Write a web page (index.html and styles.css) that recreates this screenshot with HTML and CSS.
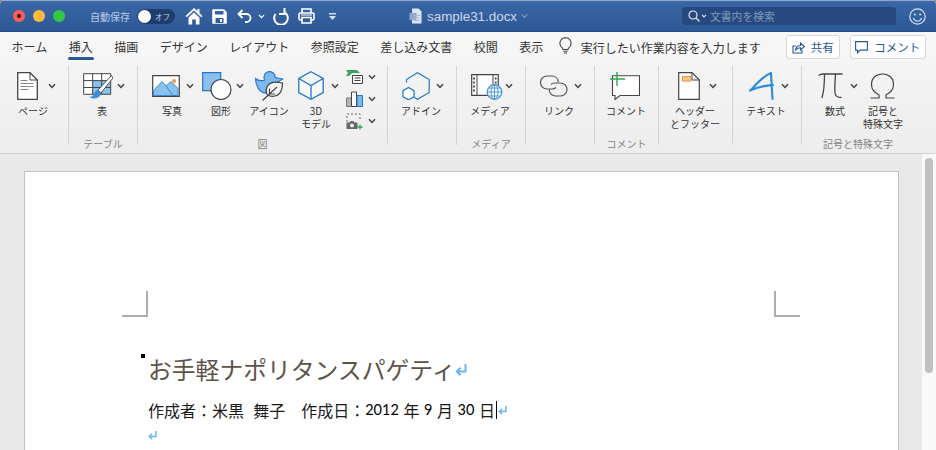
FILE: index.html
```html
<!DOCTYPE html>
<html lang="ja">
<head>
<meta charset="utf-8">
<title>sample31.docx</title>
<link rel="stylesheet" href="styles.css">
</head>
<body>
<svg class="defs" width="0" height="0">
  <symbol id="chev" viewBox="0 0 8 6"><path d="M1 1.200 4 4.400 7 1.200" fill="none" stroke="#444" stroke-width="1.500"/></symbol>
  <symbol id="ret" viewBox="0 0 12 13"><path d="M10.500 1v7.500H2M5.500 4.800 1.800 8.500l3.700 3.700" fill="none" stroke="#69b5f2" stroke-width="2"/></symbol>
</svg>
<div class="window">
  <header class="titlebar">
    <div class="lights"><span class="light red"></span><span class="light yellow"></span><span class="light green"></span></div>
    <span class="autosave">自動保存</span>
    <span class="toggle"><span class="knob"></span><span class="off">オフ</span></span>
    <svg class="qa qa-home" width="18" height="18" viewBox="0 0 18 18"><path d="M9 1 .5 9l1.200 1.200L9 3.400l7.300 6.800L17.500 9 14.500 6.200V2h-2.200v2.100zM3.500 10.500 9 5.400l5.500 5.100V17.500h-3.700v-5H7.200v5H3.500z" fill="#fff"/></svg>
    <svg class="qa qa-save" width="15" height="15" viewBox="0 0 15 15"><path d="M1 .2h11L14.800 3v11a.8.8 0 0 1-.8.8H1a.8.8 0 0 1-.8-.8V1A.8.8 0 0 1 1 .2zM3 2v3.500h8.500V2zM3.500 14h8V9h-8zM8 10h2v3H8z" fill="#fff" fill-rule="evenodd"/></svg>
    <svg class="qa qa-undo" width="15" height="14" viewBox="0 0 15 14"><path d="M5.500 1 1.500 5l4 4M1.500 5h8a4 4 0 0 1 0 8H8" fill="none" stroke="#fff" stroke-width="1.800"/></svg>
    <svg class="qa qa-chev" width="7" height="5" viewBox="0 0 8 6"><path d="M1 1.200 4 4.400 7 1.200" fill="none" stroke="#fff" stroke-width="1.400"/></svg>
    <svg class="qa qa-redo" width="16" height="17" viewBox="0 0 16 17"><path d="M2.500 6A6.800 6.800 0 1 0 12 4.500" fill="none" stroke="#fff" stroke-width="2"/><path d="M11.500 0v6H6" fill="none" stroke="#fff" stroke-width="2"/></svg>
    <svg class="qa qa-print" width="17" height="16" viewBox="0 0 17 16"><path d="M4 5V1h9v4M4 12H2.500A1.500 1.500 0 0 1 1 10.500v-4A1.500 1.500 0 0 1 2.500 5h12A1.500 1.500 0 0 1 16 6.500v4a1.500 1.500 0 0 1-1.500 1.500H13M4 9.500h9V15H4z" fill="none" stroke="#fff" stroke-width="1.600"/><path d="M3 7h11" stroke="#fff"/></svg>
    <svg class="qa qa-more" width="7" height="7" viewBox="0 0 7 7"><path d="M0 0h7v1.500H0zM0 3h7L3.500 7z" fill="#d5e0ef"/></svg>
    <svg class="qa qa-doc" width="13" height="16" viewBox="0 0 13 16"><path d="M3 .5h6.500L12.500 3.500v12H3z" fill="#dfe6f0"/><path d="M.5 5h7v7h-7z" fill="#8fa9cc"/><path d="M5 7.500h6M5 10h6M5 12.500h6" stroke="#a9bbd6"/></svg>
    <span class="filename">sample31.docx</span>
    <svg class="qa qa-fchev" width="9" height="6" viewBox="0 0 8 6"><path d="M1 1.200 4 4.400 7 1.200" fill="none" stroke="#7f9ac2" stroke-width="1.100"/></svg>
    <div class="search">
      <svg width="12" height="12" viewBox="0 0 12 12"><circle cx="5" cy="5" r="4" fill="none" stroke="#e3eaf4" stroke-width="1.200"/><path d="M8 8l3.500 3.500" stroke="#e3eaf4" stroke-width="1.300"/></svg>
      <svg class="search-chev" width="6" height="4" viewBox="0 0 8 6"><path d="M1 1.200 4 4.400 7 1.200" fill="none" stroke="#e3eaf4" stroke-width="1.600"/></svg>
      <span class="search-text">文書内を検索</span>
    </div>
    <svg class="smile" width="17" height="17" viewBox="0 0 17 17"><circle cx="8.500" cy="8.500" r="7.700" fill="none" stroke="#d5e0ef" stroke-width="1.200"/><circle cx="5.800" cy="6.500" r="1.100" fill="#d5e0ef"/><circle cx="11.200" cy="6.500" r="1.100" fill="#d5e0ef"/><path d="M4.300 10c1 2.300 2.500 3.200 4.200 3.200s3.200-.9 4.200-3.200" fill="none" stroke="#d5e0ef" stroke-width="1.100"/></svg>
  </header>

  <nav class="tabs">
    <span class="tab">ホーム</span>
    <span class="tab active">挿入</span>
    <span class="tab">描画</span>
    <span class="tab">デザイン</span>
    <span class="tab">レイアウト</span>
    <span class="tab">参照設定</span>
    <span class="tab">差し込み文書</span>
    <span class="tab">校閲</span>
    <span class="tab">表示</span>
    <svg class="bulb" width="13" height="17" viewBox="0 0 13 17"><path d="M6.500.7a5.600 5.600 0 0 0-3.300 10.100c.6.500.8 1 .8 1.700h5c0-.7.200-1.200.8-1.700A5.600 5.600 0 0 0 6.500.7zM4.300 14.200h4.400M5 16h3" fill="none" stroke="#444" stroke-width="1.100"/></svg>
    <span class="tell">実行したい作業内容を入力します</span>
    <button class="action share">
      <svg width="13" height="13" viewBox="0 0 13 13"><path d="M4 5H1v7h9V9" fill="none" stroke="#2b5797" stroke-width="1.100"/><path d="M3.500 9C4 6 6 4.500 8.500 4.500V2L12.500 5.500 8.500 9V6.800C6.500 6.800 5 7.500 3.500 9z" fill="none" stroke="#2b5797" stroke-width="1.100"/></svg>
      共有
    </button>
    <button class="action comment">
      <svg width="13" height="13" viewBox="0 0 13 13"><path d="M.6.600h11.800v8.500H5L2.500 12V9.100H.6z" fill="none" stroke="#2b5797" stroke-width="1.100"/></svg>
      コメント
    </button>
  </nav>

  <section class="ribbon">
    <div class="group g68">
      <div class="btns">
        <div class="btn b-page">
          <div class="art">
            <svg width="21" height="28" viewBox="0 0 21 28"><path d="M.7.700H13L20.300 8v19.300H.7z" fill="#fff" stroke="#444" stroke-width="1.300"/><path d="M13 .7V8h7.300" fill="none" stroke="#444"/><path d="M3.500 8.500h7M3.500 11.500h13M3.500 14.500h13M3.500 17.500h8" stroke="#888"/></svg>
            <svg class="chev" width="8" height="6"><use href="#chev"/></svg>
          </div>
          <div class="lbl">ページ</div>
        </div>
      </div>
      <div class="gname"></div>
    </div>
    <i class="sep"></i>
    <div class="group g68">
      <div class="btns">
        <div class="btn b-table">
          <div class="art">
            <svg width="30" height="30" viewBox="0 0 30 30"><path d="M.7 2.700h27v20.600H.7z" fill="#fff"/><path d="M9.700 9.600h18v13.700h-18z" fill="#8cc0ec"/><path d="M.7 2.700h27v20.600H.7zM9.700 2.700v20.600M18.700 2.700v20.600M.7 9.600h27M.7 16.500h27" fill="none" stroke="#444"/><path d="M28.500 4.500 15 19l3 2.800L30 7z" fill="#fff" stroke="#444" stroke-width=".9"/><path d="M15 19c-3 .5-3 3-4.500 5-1 1.500-3 2-4.500 1.800 3 2.500 8.500 2.500 11-1 1-1.500 1.200-2.500.8-3.500z" fill="#3c8fd4"/></svg>
            <svg class="chev" width="8" height="6"><use href="#chev"/></svg>
          </div>
          <div class="lbl">表</div>
        </div>
      </div>
      <div class="gname">テーブル</div>
    </div>
    <i class="sep"></i>
    <div class="group g-img">
      <div class="btns p9">
        <div class="btn b-photo">
          <div class="art">
            <svg width="28" height="22" viewBox="0 0 28 22"><path d="M.7.700h26.600v20.600H.7z" fill="#fff" stroke="#444" stroke-width="1.200"/><path d="M1.500 20.500v-5L10 6.500l14 14z" fill="#8cc0ec" stroke="#1e78c8" stroke-width=".8"/><path d="M14 11l5-4.500 7 7v7h-5z" fill="#8cc0ec" stroke="#1e78c8" stroke-width=".8"/><circle cx="22" cy="6" r="2" fill="#f0964a"/></svg>
            <svg class="chev" width="8" height="6"><use href="#chev"/></svg>
          </div>
          <div class="lbl">写真</div>
        </div>
        <div class="btn b-shape">
          <div class="art">
            <svg width="30" height="28" viewBox="0 0 30 28"><path d="M.7.700h18v18H.7z" fill="#8cc0ec" stroke="#1e78c8" stroke-width="1.200"/><circle cx="19" cy="17.500" r="10" fill="#fff" stroke="#444" stroke-width="1.200"/></svg>
            <svg class="chev" width="8" height="6"><use href="#chev"/></svg>
          </div>
          <div class="lbl">図形</div>
        </div>
        <div class="btn b-icon">
          <div class="art">
            <svg width="29" height="30" viewBox="0 0 29 30"><path d="M.6 7.500C2.500 9.500 6 10 9.500 9.300 8.500 6 9 3 11.500 1.500c3-1.700 7-.8 8.300 2.500l.4 2.500L28 8l-6.500 3.500c-.5 5-4 9.500-10 10.500C4.500 22 .4 15 .6 7.500z" fill="#7fb8ea" stroke="#1e78c8" stroke-width="1.100"/><path d="M27.500 12c-6-1.500-12.500-1-15 3-1.800 3-1.500 6.500 0 9 4 2.300 9 1.500 12-1.500 2.500-3 3-6.500 3-10.500z" fill="#f3f3f3" stroke="#444" stroke-width="1.200"/><path d="M7.500 29.500 22 16M14 23h6M14.500 17.500V23" fill="none" stroke="#444" stroke-width="1.100"/></svg>
          </div>
          <div class="lbl">アイコン</div>
        </div>
        <div class="btn b-3d">
          <div class="art">
            <svg width="26" height="29" viewBox="0 0 26 29"><path d="M13 .8 25.200 7.500v14L13 28.200.8 21.500v-14zM.8 7.500 13 14.500 25.200 7.500M13 14.500v13.700" fill="#fff" fill-opacity=".5" stroke="#1e78c8" stroke-width="1.300"/></svg>
            <svg class="chev" width="8" height="6"><use href="#chev"/></svg>
          </div>
          <div class="lbl">3D<br>モデル</div>
        </div>
        <div class="minis">
          <div class="mini">
            <svg width="17" height="14" viewBox="0 0 17 14"><path d="M0 0h11l3 3H6L3 6H0l2-3z" fill="#3ea066"/><path d="M6.500 5.500h10v8h-10z" fill="#fff" stroke="#444"/><path d="M8.500 8h6M8.500 10.500h6" stroke="#444"/></svg>
            <svg class="chev" width="8" height="6"><use href="#chev"/></svg>
          </div>
          <div class="mini">
            <svg width="17" height="16" viewBox="0 0 17 16"><path d="M.5 7h5v8.500h-5z" fill="#b5b5b5" stroke="#777"/><path d="M5.500 1h5v14.500h-5z" fill="#fff" stroke="#444"/><path d="M11 4.500h5.500v11H11z" fill="#7fb8ea" stroke="#1e78c8"/></svg>
            <svg class="chev" width="8" height="6"><use href="#chev"/></svg>
          </div>
          <div class="mini">
            <svg width="17" height="17" viewBox="0 0 17 17"><path d="M1 9V1h13v7" fill="none" stroke="#666" stroke-dasharray="2 2"/><path d="M.5 9.500h3l1-1.500h3l1 1.500h3v6.500H.5z" fill="#666"/><circle cx="6" cy="12.500" r="2" fill="#eee"/><path d="M14 11.500v5M11.500 14h5" stroke="#2ca84f" stroke-width="1.300"/></svg>
            <svg class="chev" width="8" height="6"><use href="#chev"/></svg>
          </div>
        </div>
      </div>
      <div class="gname">図</div>
    </div>
    <i class="sep"></i>
    <div class="group g68">
      <div class="btns">
        <div class="btn b-addin">
          <div class="art">
            <svg width="28" height="28" viewBox="0 0 28 28"><path d="M4.500 10.500v-3L15.500.8 27.200 7.500v13l-11.700 6.700-3.500-2" fill="none" stroke="#1e78c8" stroke-width="1.200"/><path d="M6.500 15.500l5.500 3.200v6.100l-5.500 3-5.500-3v-6.100z" fill="#fff" stroke="#1e78c8" stroke-width="1.200"/></svg>
            <svg class="chev" width="8" height="6"><use href="#chev"/></svg>
          </div>
          <div class="lbl">アドイン</div>
        </div>
      </div>
      <div class="gname"></div>
    </div>
    <i class="sep"></i>
    <div class="group g68">
      <div class="btns">
        <div class="btn b-media">
          <div class="art">
            <svg width="34" height="30" viewBox="0 0 34 30"><path d="M.7 3.700h26.600v20.600H.7z" fill="#fff" stroke="#444" stroke-width="1.200"/><path d="M6 3.700v20.600M22 3.700V18" stroke="#444"/><path d="M3 6.500v15M24.700 6.500v8" stroke="#444" stroke-width="1.800" stroke-dasharray="2 2"/><circle cx="23.500" cy="21" r="7.300" fill="#fff" stroke="#3c8fd4" stroke-width="1.200"/><path d="M16.500 21h14M23.500 13.800v14.500M17.800 17h11.400M17.800 25h11.400" stroke="#3c8fd4" stroke-width=".9"/><ellipse cx="23.500" cy="21" rx="3.500" ry="7.300" fill="none" stroke="#3c8fd4" stroke-width=".9"/></svg>
            <svg class="chev" width="8" height="6"><use href="#chev"/></svg>
          </div>
          <div class="lbl">メディア</div>
        </div>
      </div>
      <div class="gname">メディア</div>
    </div>
    <i class="sep"></i>
    <div class="group g68">
      <div class="btns">
        <div class="btn b-link">
          <div class="art">
            <svg width="28" height="22" viewBox="0 0 28 22"><path d="M16 12.500c-1 1-2.500 1.500-4 1.500H7a6.300 6.300 0 0 1 0-13h5.500a6.300 6.300 0 0 1 5.700 6" fill="none" stroke="#555" stroke-width="1.200"/><path d="M11 9.500c1-1 2.200-1.500 3.500-1.500h6a6.300 6.300 0 0 1 0 13H15a6.300 6.300 0 0 1-5.700-6.500" fill="none" stroke="#555" stroke-width="1.200"/></svg>
            <svg class="chev" width="8" height="6"><use href="#chev"/></svg>
          </div>
          <div class="lbl">リンク</div>
        </div>
      </div>
      <div class="gname"></div>
    </div>
    <i class="sep"></i>
    <div class="group g63">
      <div class="btns">
        <div class="btn b-cmt">
          <div class="art">
            <svg width="30" height="28" viewBox="0 0 30 28"><path d="M2.500 3.700h27v19.800H10L5 27.500v-4H2.500z" fill="#fff" stroke="#444" stroke-width="1.100"/><path d="M7 0v14M0 7h15" stroke="#2ca84f" stroke-width="1.400"/></svg>
          </div>
          <div class="lbl">コメント</div>
        </div>
      </div>
      <div class="gname">コメント</div>
    </div>
    <i class="sep"></i>
    <div class="group g73">
      <div class="btns">
        <div class="btn b-head">
          <div class="art">
            <svg width="22" height="28" viewBox="0 0 22 28"><path d="M.7.700H14L21.300 8v19.300H.7z" fill="#fff" stroke="#444" stroke-width="1.200"/><path d="M14 .7V8h7.300" fill="none" stroke="#444"/><path d="M4.500 4.500h8.500v4.500H4.500z" fill="#f8c887" stroke="#ec8f3a"/></svg>
            <svg class="chev" width="8" height="6"><use href="#chev"/></svg>
          </div>
          <div class="lbl">ヘッダー<br>とフッター</div>
        </div>
      </div>
      <div class="gname"></div>
    </div>
    <i class="sep"></i>
    <div class="group g68">
      <div class="btns">
        <div class="btn b-text">
          <div class="art">
            <svg width="26" height="28" viewBox="0 0 26 28"><path d="M1 18.500C7 16 11 14 24 13M22 1C15 3.500 9 10 2 18M22 1l1.500 26" fill="none" stroke="#2b8ad6" stroke-width="2.100" stroke-linecap="round"/></svg>
            <svg class="chev" width="8" height="6"><use href="#chev"/></svg>
          </div>
          <div class="lbl">テキスト</div>
        </div>
      </div>
      <div class="gname"></div>
    </div>
    <i class="sep"></i>
    <div class="group g-sym">
      <div class="btns p4">
        <div class="btn b-math">
          <div class="art">
            <svg width="25" height="26" viewBox="0 0 25 26"><path d="M.5 2.500C2 1.500 3 1 5 1h19.500M6.500 1C6.500 11 6 18 4 25M17.500 1c-.5 8-1 14-.5 19 .3 3 2 4.500 6.500 4.500" fill="none" stroke="#444" stroke-width="1.300"/></svg>
            <svg class="chev" width="8" height="6"><use href="#chev"/></svg>
          </div>
          <div class="lbl">数式</div>
        </div>
        <div class="btn b-sym">
          <div class="art">
            <svg width="25" height="26" viewBox="0 0 25 26"><path d="M.5 25h8.500v-3C4 19.500 1.500 16 1.500 11.500 1.500 5 6 1 12.500 1S23.500 5 23.500 11.500c0 4.500-2.500 8-7.500 10.500v3h8.500" fill="none" stroke="#444" stroke-width="1.200"/></svg>
          </div>
          <div class="lbl">記号と<br>特殊文字</div>
        </div>
      </div>
      <div class="gname">記号と特殊文字</div>
    </div>
  </section>

  <main class="workspace">
    <div class="canvas">
      <article class="page">
        <div class="marks"><i class="mark mark-l"></i><i class="mark mark-r"></i></div>
        <div class="body">
          <h1 class="doc-title"><span class="anchor"></span>お手軽ナポリタンスパゲティ<svg class="ret ret-lg" width="12" height="13"><use href="#ret"/></svg></h1>
          <p class="doc-line">作成者：米黒&nbsp;&nbsp;舞子　作成日：<span class="num">2012</span> 年 <span class="num">9</span> 月 <span class="num">30</span> 日<span class="caret"></span><svg class="ret" width="9" height="10"><use href="#ret"/></svg></p>
          <p class="doc-empty"><svg class="ret" width="9" height="10"><use href="#ret"/></svg></p>
        </div>
      </article>
    </div>
    <aside class="scrollbar"><span class="thumb"></span></aside>
  </main>
</div>
</body>
</html>
```

FILE: styles.css
```css
* { box-sizing: border-box; }
html, body { margin: 0; padding: 0; height: 100%; overflow: hidden; background: #8d8d8d; }
body { font-family: "Noto Sans CJK JP", "Liberation Sans", sans-serif; }
.defs { position: absolute; }
.window { height: 450px; display: flex; flex-direction: column; overflow: hidden; border-radius: 5px 5px 0 0; background: #ececec; }

/* title bar */
.titlebar { height: 32px; flex: none; display: flex; align-items: center; background: linear-gradient(#416ca9 0, #3a65a4 8%, #2d5997 100%); border-top: 1px solid #8ba5cb; border-bottom: 1px solid #254c85; color: #fff; }
.lights { display: flex; gap: 8px; margin-left: 13px; }
.light { width: 12px; height: 12px; border-radius: 50%; display: block; }
.red { background: radial-gradient(circle, #4a0a0a 0 1.800px, #fc5f5a 2.300px); }
.yellow { background: #fdbb3f; }
.green { background: #33c748; }
.autosave { margin-left: 25px; width: 47px; font-size: 10px; color: #bccde6; white-space: nowrap; }
.toggle { width: 38px; height: 15px; border-radius: 8px; background: #1f3e6e; display: flex; align-items: center; padding-left: 1px; }
.knob { width: 13px; height: 13px; border-radius: 50%; background: #fff; flex: none; }
.off { font-size: 7.500px; margin-left: 4px; color: #c5d3e8; white-space: nowrap; }
.qa { flex: none; display: block; }
.qa-home { margin-left: 10px; }
.qa-save { margin-left: 9px; }
.qa-undo { margin-left: 10px; }
.qa-chev { margin-left: 6px; }
.qa-redo { margin-left: 8px; }
.qa-print { margin-left: 9px; }
.qa-more { margin-left: 14px; }
.qa-doc { margin-left: 73px; }
.filename { margin-left: 5px; width: 90px; font: 13.400px "Liberation Sans", sans-serif; color: #cdd9ea; white-space: nowrap; }
.qa-fchev { margin-left: 3px; }
.search { margin-left: 153px; width: 214px; height: 18px; border-radius: 3px; background: #28497f; display: flex; align-items: center; padding-left: 6px; }
.search-chev { margin-left: 1px; }
.search-text { margin-left: 3px; font-size: 10.800px; color: #7f98bd; white-space: nowrap; }
.smile { margin-left: 13px; flex: none; }

/* tabs */
.tabs { height: 30px; flex: none; display: flex; align-items: center; padding-left: 11.500px; background: #f6f6f6; font-size: 12px; color: #333; }
.tab { position: relative; margin-right: 21.500px; line-height: 18px; white-space: nowrap; }
.tab.active::after { content: ""; position: absolute; left: -1px; right: -1px; top: 19px; height: 3px; border-radius: 2px; background: #2b5797; }
.bulb { margin-left: -6px; margin-top: -4px; flex: none; }
.tell { margin-left: 9px; width: 205px; white-space: nowrap; }
.action { height: 24px; display: flex; align-items: center; justify-content: center; gap: 6px; border: 1px solid #d8d8d8; border-radius: 3px; background: #fff; font: 11.500px "Noto Sans CJK JP", sans-serif; color: #2b5797; padding: 0; margin-top: 0; }
.share { width: 54px; }
.comment { width: 76px; margin-left: 10px; }

/* ribbon */
.ribbon { height: 92px; flex: none; display: flex; background: linear-gradient(#f4f4f4, #ededed); border-bottom: 1px solid #d2d2d2; }
.sep { flex: none; width: 1px; margin: 4px 0 8px; background: #d4d4d4; }
.group { flex: none; display: flex; flex-direction: column; }
.g68 { width: 68px; }
.g63 { width: 63px; }
.g73 { width: 73px; }
.g-img { width: 249px; }
.g-sym { width: 112px; }
.btns { flex: 1; display: flex; padding-top: 8px; min-height: 0; }
.p9 { padding-left: 9px; }
.p4 { padding-left: 4px; }
.gname { height: 17px; margin-bottom: 1px; text-align: center; font-size: 10px; line-height: 17px; color: #858585; white-space: nowrap; }
.btn { flex: none; width: var(--w); display: flex; flex-direction: column; }
.art { height: 31px; margin-bottom: 4px; display: flex; align-items: center; padding-left: var(--pad); gap: var(--gap); }
.art svg { flex: none; display: block; }
.lbl { display: flex; justify-content: center; text-align: center; white-space: nowrap; font-size: 10px; line-height: 12.500px; color: #333; }
.b-page { --w: 66px; --pad: 17px; --gap: 10px; }
.b-table { --w: 66px; --pad: 14px; --gap: 4px; }
.b-photo { --w: 50px; --pad: 5px; --gap: 6px; }
.b-shape { --w: 48px; --pad: 5px; --gap: 4px; }
.b-icon { --w: 48px; --pad: 10px; --gap: 0; }
.b-3d { --w: 46px; --pad: 5px; --gap: 7px; }
.b-addin { --w: 66px; --pad: 14px; --gap: 6px; }
.b-media { --w: 66px; --pad: 14px; --gap: 0; }
.b-link { --w: 66px; --pad: 14px; --gap: 6px; }
.b-cmt { --w: 62px; --pad: 15px; --gap: 0; }
.b-head { --w: 72px; --pad: 19px; --gap: 9px; }
.b-text { --w: 66px; --pad: 16px; --gap: 6px; }
.b-math { --w: 58px; --pad: 12px; --gap: 7px; }
.b-sym { --w: 38px; --pad: 6px; --gap: 0; }
.minis { margin: -4px 0 0 7px; display: flex; flex-direction: column; }
.mini { height: 22px; display: flex; align-items: center; gap: 5px; }
.mini svg { flex: none; display: block; }

/* document */
.workspace { flex: 1; min-height: 0; display: flex; background: #e9e9e9; }
.canvas { flex: 1; min-width: 0; overflow: hidden; padding: 17px 0 0 24px; }
.page { width: 875px; height: 400px; background: #fff; border: 1px solid #c2c2c2; padding: 119px 98px 0 97px; }
.marks { display: flex; justify-content: space-between; }
.mark { display: block; width: 26px; height: 26px; border-bottom: 2px solid #adadad; }
.mark-l { border-right: 2px solid #adadad; }
.mark-r { border-left: 2px solid #adadad; }
.body { padding-left: 26px; }
.doc-title { position: relative; margin: 34px 0 0; font-size: 23.800px; font-weight: 400; line-height: 36px; color: #5e5347; white-space: nowrap; display: flex; align-items: center; }
.anchor { position: absolute; left: -7px; top: 3px; width: 4px; height: 4px; background: #000; }
.ret { flex: none; }
.doc-line { margin: 12px 0 0; font-size: 16px; word-spacing: 1px; line-height: 22px; color: #1a1a1a; display: flex; align-items: center; white-space: pre; }
.num { font-family: "Lato", sans-serif; font-size: 14.500px; color: #000; }
.caret { width: 1px; height: 18px; background: #000; margin: 0 1px; }
.doc-empty { margin: 7px 0 0; line-height: 10px; }
.scrollbar { width: 14px; flex: none; background: #f8f8f8; padding: 4px 3px 0; }
.thumb { display: block; width: 8px; height: 215px; border-radius: 4px; background: #c0c0c0; }
```
